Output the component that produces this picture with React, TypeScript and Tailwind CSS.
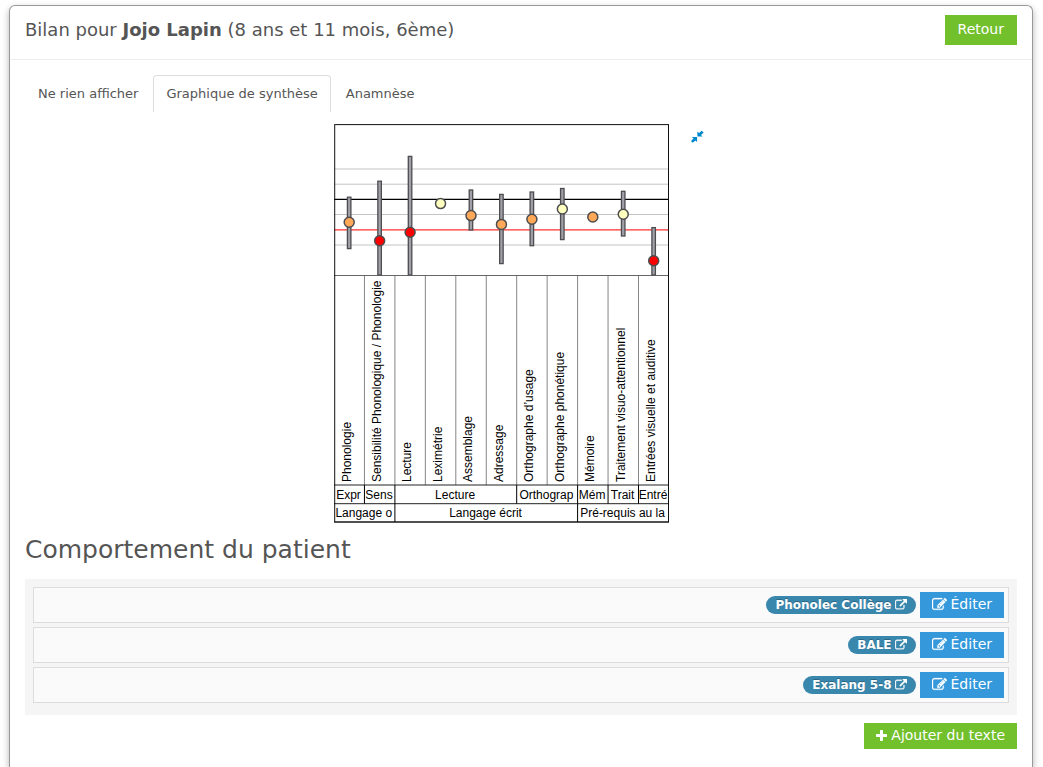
import React from 'react';

const tabs = [
  { id: 1, label: 'Ne rien afficher', active: false },
  { id: 2, label: 'Graphique de synthèse', active: true },
  { id: 3, label: 'Anamnèse', active: false },
];

const tests = [
  { id: 1, name: 'Phonolec Collège' },
  { id: 2, name: 'BALE' },
  { id: 3, name: 'Exalang 5-8' },
];

const ORANGE = '#ffa858';
const RED = '#ff0000';
const YELLOW = '#ffffc0';

const scores = [
  { label: 'Phonologie', y: 98.3, color: ORANGE, bar: [73.2, 124.6] },
  { label: 'Sensibilité Phonologique / Phonologie', y: 116.8, color: RED, bar: [57.2, 151] },
  { label: 'Lecture', y: 108.2, color: RED, bar: [32.4, 151] },
  { label: 'Leximétrie', y: 79.6, color: YELLOW, bar: null },
  { label: 'Assemblage', y: 91.6, color: ORANGE, bar: [66, 106] },
  { label: 'Adressage', y: 100.4, color: ORANGE, bar: [70.4, 139.6] },
  { label: 'Orthographe d’usage', y: 95.3, color: ORANGE, bar: [68, 121.7] },
  { label: 'Orthographe phonétique', y: 85, color: YELLOW, bar: [64.5, 115.6] },
  { label: 'Mémoire', y: 93, color: ORANGE, bar: null },
  { label: 'Traitement visuo-attentionnel', y: 90.2, color: YELLOW, bar: [67.3, 112] },
  { label: 'Entrées visuelle et auditive', y: 136.8, color: RED, bar: [103.6, 151] },
];

// start / end are column indexes
const subGroups = [
  { label: 'Expr', start: 0, end: 1 },
  { label: 'Sens', start: 1, end: 2 },
  { label: 'Lecture', start: 2, end: 6 },
  { label: 'Orthograp', start: 6, end: 8 },
  { label: 'Mém', start: 8, end: 9 },
  { label: 'Trait', start: 9, end: 10 },
  { label: 'Entré', start: 10, end: 11 },
];

const groups = [
  { label: 'Langage o', start: 0, end: 2 },
  { label: 'Langage écrit', start: 2, end: 8 },
  { label: 'Pré-requis au la', start: 8, end: 11 },
];

const COL = 30.45;
const colX = (i: number) => i * COL;
const middle = (start: number, end: number) => (colX(start) + colX(end)) / 2 - 0.7;

const EditIcon: React.FC = () => (
  <svg viewBox="0 0 1792 1792" className="h-[15px] w-[15px]" fill="currentColor" stroke="currentColor" strokeWidth="30" aria-hidden="true">
    <path d="M888 1184l116-116-152-152-116 116v56h96v96h56zm440-720q-16-16-33 1l-350 350q-17 17-1 33t33-1l350-350q17-17 1-33zm80 594v190q0 119-84.5 203.5t-203.5 84.5h-832q-119 0-203.5-84.5t-84.5-203.5v-832q0-119 84.5-203.5t203.5-84.5h832q63 0 117 25 15 7 18 23 3 17-9 29l-49 49q-14 14-32 8-23-6-45-6h-832q-66 0-113 47t-47 113v832q0 66 47 113t113 47h832q66 0 113-47t47-113v-126q0-13 9-22l64-64q15-15 35-7t20 29zm-96-738l288 288-672 672h-288v-288zm444 132l-92 92-288-288 92-92q28-28 68-28t68 28l152 152q28 28 28 68t-28 68z" />
  </svg>
);

const ExternalLinkIcon: React.FC = () => (
  <svg viewBox="0 0 1792 1792" className="h-3 w-3" fill="currentColor" stroke="currentColor" strokeWidth="50" aria-hidden="true">
    <path d="M1408 928v320q0 119-84.5 203.5t-203.5 84.5h-832q-119 0-203.5-84.5t-84.5-203.5v-832q0-119 84.5-203.5t203.5-84.5h704q14 0 23 9t9 23v64q0 14-9 23t-23 9h-704q-66 0-113 47t-47 113v832q0 66 47 113t113 47h832q66 0 113-47t47-113v-320q0-14 9-23t23-9h64q14 0 23 9t9 23zm384-864v512q0 26-19 45t-45 19-45-19l-176-176-652 652q-10 10-23 10t-23-10l-114-114q-10-10-10-23t10-23l652-652-176-176q-19-19-19-45t19-45 45-19h512q26 0 45 19t19 45z" />
  </svg>
);

const PlusIcon: React.FC = () => (
  <svg viewBox="192 128 1408 1408" className="h-[11px] w-[11px]" fill="currentColor" aria-hidden="true">
    <path d="M1600 736v192q0 40-28 68t-68 28h-416v416q0 40-28 68t-68 28h-192q-40 0-68-28t-28-68v-416h-416q-40 0-68-28t-28-68v-192q0-40 28-68t68-28h416v-416q0-40 28-68t68-28h192q40 0 68 28t28 68v416h416q40 0 68 28t28 68z" />
  </svg>
);

const ShrinkIcon: React.FC = () => (
  <svg viewBox="0 0 13 13" className="h-[13px] w-[13px]" fill="currentColor" aria-hidden="true">
    <path d="M6.4 1.4v5.2h5.2L10 4.9l2.6-2.3-1.9-1.9L8.1 3.1z" />
    <path d="M6.1 12.1V6.9H.9l1.6 1.6L0 10.9l1.8 1.9 2.6-2.4z" />
  </svg>
);

const SynthesisChart: React.FC = () => (
  <svg
    viewBox="0 0 335 399"
    width="335"
    height="399"
    role="img"
    aria-label="Graphique de synthèse"
    className="shrink-0 font-['Liberation_Sans',Arial,sans-serif] text-[12px]"
  >
    {[45, 60.2, 90.5, 121].map((y) => (
      <line key={y} x1="0" x2="335" y1={y} y2={y} stroke="#c4c4c4" strokeWidth="1" />
    ))}
    <line x1="0" x2="335" y1="75.4" y2="75.4" stroke="#000" strokeWidth="1.4" />
    <line x1="0" x2="335" y1="105.8" y2="105.8" stroke="#ff3030" strokeWidth="1.2" />

    {scores.map((score, i) => (
      <g key={score.label}>
        {score.bar && (
          <rect
            x={colX(i) + 13.4}
            y={score.bar[0]}
            width="3.5"
            height={score.bar[1] - score.bar[0]}
            fill="#a0a0a8"
            stroke="#4d4d50"
            strokeWidth="1.3"
          />
        )}
        <circle cx={colX(i) + 15.2} cy={score.y} r="5" fill={score.color} stroke="#4d4d50" strokeWidth="1.5" />
        <text transform={`translate(${colX(i) + 16.5} 358) rotate(-90)`}>{score.label}</text>
        {i > 0 && <line x1={colX(i)} x2={colX(i)} y1="151.5" y2="361" stroke="#666" strokeWidth="0.8" />}
      </g>
    ))}

    <line x1="0" x2="335" y1="151.5" y2="151.5" stroke="#555" strokeWidth="0.9" />
    {[361, 379.7, 398].map((y) => (
      <line key={y} x1="0" x2="335" y1={y} y2={y} stroke="#222" strokeWidth="1" />
    ))}

    {subGroups.map((group) => (
      <g key={group.label}>
        <text x={middle(group.start, group.end)} y="375" textAnchor="middle">
          {group.label}
        </text>
        {group.start > 0 && (
          <line x1={colX(group.start)} x2={colX(group.start)} y1="361" y2="379.7" stroke="#000" strokeWidth="1" />
        )}
      </g>
    ))}
    {groups.map((group) => (
      <g key={group.label}>
        <text x={middle(group.start, group.end)} y="393" textAnchor="middle">
          {group.label}
        </text>
        {group.start > 0 && (
          <line x1={colX(group.start)} x2={colX(group.start)} y1="379.7" y2="398" stroke="#000" strokeWidth="1" />
        )}
      </g>
    ))}
    <rect x="0.7" y="0.6" width="333.8" height="397.4" fill="none" stroke="#111" strokeWidth="1" />
  </svg>
);

const App: React.FC = () => {
  return (
    <div className="flex min-h-screen flex-col bg-white pt-[5px] pr-[10px] pl-[9px] font-['DejaVu_Sans',Verdana,sans-serif] text-[#555]">
      <main className="flex grow flex-col rounded-t-md border border-b-0 border-[#999] bg-white shadow-[0_3px_7px_rgba(0,0,0,0.3)]">
        <header className="flex items-center justify-between border-b border-[#eee] px-[15px] pt-[9px] pb-[14px]">
          <h1 className="text-[18px] leading-[30px]">
            Bilan pour <strong>Jojo Lapin</strong> (8 ans et 11 mois, 6ème)
          </h1>
          <a href="#retour" className="bg-[#73c02d] px-[13px] pb-[2px] text-sm leading-7 text-white">
            Retour
          </a>
        </header>

        <div className="px-[15px] pt-[15px]">
          <nav className="mb-3 flex gap-[2px] text-[13px] leading-5">
            {tabs.map((tab) => (
              <a
                key={tab.id}
                href={`#tab${tab.id}`}
                className={`rounded-t border border-b-0 px-3 py-2 ${tab.active ? 'border-[#ddd]' : 'border-transparent'}`}
              >
                {tab.label}
              </a>
            ))}
          </nav>

          <div className="flex items-start justify-center">
            <SynthesisChart />
            <button type="button" aria-label="Réduire" className="ml-[18px] px-1 pt-[6px] text-[#0088cc]">
              <ShrinkIcon />
            </button>
          </div>

          <h2 className="mt-[9px] mb-[11px] text-[25px] leading-9">Comportement du patient</h2>

          <div className="bg-[#f5f5f5] px-2 pt-2 pb-3">
            <ul className="flex flex-col gap-1">
              {tests.map((test) => (
                <li key={test.id} className="flex items-center justify-end gap-1 border border-[#ddd] bg-[#fafafa] p-1">
                  <a
                    href={`#test${test.id}`}
                    className="flex items-center gap-[3px] rounded-full bg-[#3a87ad] px-[9px] text-xs leading-[18px] font-bold text-white [text-shadow:0_-1px_0_rgba(0,0,0,0.25)]"
                  >
                    {test.name}
                    <ExternalLinkIcon />
                  </a>
                  <button type="button" className="flex items-center gap-1 bg-[#3498db] px-3 pb-[2px] text-sm leading-6 text-white">
                    <EditIcon />
                    Éditer
                  </button>
                </li>
              ))}
            </ul>
          </div>

          <div className="mt-2 flex justify-end">
            <button type="button" className="flex items-center gap-1 bg-[#73c02d] px-3 pb-[2px] text-sm leading-6 text-white">
              <PlusIcon />
              Ajouter du texte
            </button>
          </div>
        </div>
      </main>
    </div>
  );
};

export default App;
